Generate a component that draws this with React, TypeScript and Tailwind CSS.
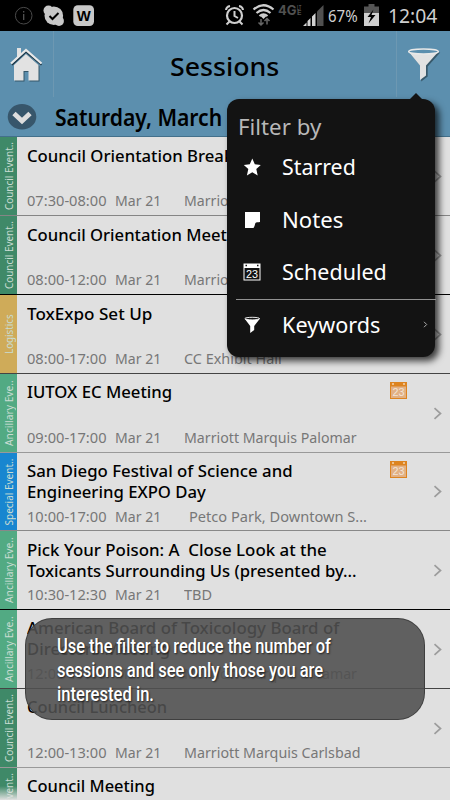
import { useLayoutEffect, useRef, useState } from 'react';
import type { ReactNode } from 'react';

/** Single line of text squeezed or stretched horizontally to a given width. */
function Fit({ w, className = '', children }: { w: number; className?: string; children: ReactNode }) {
  const ref = useRef<HTMLSpanElement>(null);
  const [k, setK] = useState(1);
  useLayoutEffect(() => {
    if (ref.current) setK(w / ref.current.offsetWidth);
  }, [w]);
  return (
    <span className={`block shrink-0 whitespace-pre ${className}`} style={{ width: w }}>
      <span ref={ref} className="inline-block origin-left" style={{ transform: `scaleX(${k})` }}>
        {children}
      </span>
    </span>
  );
}

type Line = [string, number];
interface Session {
  label: Line;
  color: string;
  line: string;
  height: string;
  title: Line[];
  time?: string;
  place?: Line;
  indent?: boolean;
  scheduled?: boolean;
  raised?: boolean;
}

const sessions: Session[] = [
  { label: ['Council Event..', 68], color: 'bg-[#3f8968]', line: 'border-[#858585]', height: 'h-[79px]', title: [['Council Orientation Breakfast', 236]], time: '07:30-08:00', place: ['Marriott Marquis', 113] },
  { label: ['Council Event..', 68], color: 'bg-[#3f8968]', line: 'border-black', height: 'h-[79px]', title: [['Council Orientation Meeting', 225]], time: '08:00-12:00', place: ['Marriott Marquis', 113] },
  { label: ['Logistics', 40], color: 'bg-[#cfab59]', line: 'border-[#444]', height: 'h-[79px]', title: [['ToxExpo Set Up', 125.5]], time: '08:00-17:00', place: ['CC Exhibit Hall', 98] },
  { label: ['Ancillary Eve..', 66], color: 'bg-[#52aa83]', line: 'border-[#999]', height: 'h-[79px]', title: [['IUTOX EC Meeting', 145.5]], time: '09:00-17:00', place: ['Marriott Marquis Palomar', 173], scheduled: true, raised: true },
  { label: ['Special Event..', 67], color: 'bg-[#1886d0]', line: 'border-[#888]', height: 'h-[78px]', title: [['San Diego Festival of Science and', 265.5], ['Engineering EXPO Day', 179]], time: '10:00-17:00', place: ['Petco Park, Downtown S...', 178], indent: true, scheduled: true, raised: true },
  { label: ['Ancillary Eve..', 66], color: 'bg-[#52aa83]', line: 'border-black', height: 'h-[79px]', title: [['Pick Your Poison: A  Close Look at the', 299.5], ['Toxicants Surrounding Us (presented by...', 330]], time: '10:30-12:30', place: ['TBD', 28] },
  { label: ['Ancillary Eve..', 66], color: 'bg-[#52aa83]', line: 'border-[#444]', height: 'h-[79px]', title: [['American Board of Toxicology Board of', 312], ['Directors Meeting', 143]], time: '12:00-17:00', place: ['Marriott Marquis Miramar', 173], raised: true },
  { label: ['Council Event..', 68], color: 'bg-[#3f8968]', line: 'border-[#999]', height: 'h-[79px]', title: [['Council Luncheon', 140.5]], time: '12:00-13:00', place: ['Marriott Marquis Carlsbad', 176], raised: true },
  { label: ['Council Event..', 68], color: 'bg-[#3f8968]', line: 'border-[#999]', height: 'h-[79px]', title: [['Council Meeting', 128]], raised: true },
];

function OrangeCalendar() {
  return (
    <svg width="17" height="17" viewBox="0 0 17 17" className="block">
      <rect width="17" height="17" fill="#dd8420" />
      <rect x="1" y="4.500" width="15" height="11.500" fill="#e2b084" />
      <path d="M2 2h2M13 2h2" stroke="#f3d3b0" strokeWidth="1.500" />
      <text x="8.500" y="14" textAnchor="middle" textLength="12" lengthAdjust="spacingAndGlyphs" fontSize="10" fontFamily="Liberation Sans, sans-serif" fill="#f0e4d8">23</text>
    </svg>
  );
}

function SessionRow({ s }: { s: Session }) {
  return (
    <div className={`flex shrink-0 border-b ${s.line} ${s.height}`}>
      <div className={`flex w-[17px] shrink-0 items-center justify-center ${s.color}`}>
        <div className="shrink-0 -rotate-90">
          <Fit w={s.label[1]} className="text-[11.500px] leading-[16px] text-[#c9dcd2]">{s.label[0]}</Fit>
        </div>
      </div>
      <div className={`flex w-[350px] shrink-0 flex-col pl-[10px] ${s.raised ? 'pt-[7px]' : 'pt-[8px]'}`}>
        <div className={`text-[17px] font-medium leading-[21px] text-black ${s.raised ? 'h-[46px]' : 'h-[45px]'}`}>
          {s.title.map(([t, w]) => <Fit key={t} w={w}>{t}</Fit>)}
        </div>
        {s.time && s.place && (
          <div className="flex text-[15px] leading-[20px] text-[#777]">
            <Fit w={80} className="mr-[8px]">{s.time}</Fit>
            <Fit w={46} className="mr-[23px]">Mar 21</Fit>
            <Fit w={s.place[1]} className={s.indent ? 'ml-[5px]' : ''}>{s.place[0]}</Fit>
          </div>
        )}
      </div>
      <div className="w-[40px] shrink-0 pl-[23px] pt-[8px]">{s.scheduled && <OrangeCalendar />}</div>
      <div className="flex flex-1 items-center justify-end pr-[8px]">
        <svg width="9" height="13" viewBox="0 0 9 13" fill="none" stroke="#9c9c9c" strokeWidth="1.700">
          <path d="M1.500 1.200 7.500 6.500l-6 5.300" />
        </svg>
      </div>
    </div>
  );
}

function StatusBar() {
  return (
    <div className="flex h-[31px] shrink-0 items-start bg-black text-[#cfcfcf]">
      <svg width="100" height="31" viewBox="0 0 100 31">
        <circle cx="23.700" cy="15.700" r="8.300" fill="none" stroke="#4a4a4a" strokeWidth="1" />
        <path d="M23.700 14v6M23.700 11v1.500" stroke="#5a5a5a" strokeWidth="1.200" />
        <circle cx="53.800" cy="15.700" r="9.300" fill="#c8c8c8" />
        <circle cx="48.500" cy="10.500" r="5" fill="#c8c8c8" />
        <circle cx="59" cy="21" r="4.900" fill="#c8c8c8" />
        <path d="m49.500 16 3 3 6-6" fill="none" stroke="#000" strokeWidth="2" />
        <rect x="73.300" y="5.300" width="20.700" height="20.700" rx="4.500" fill="#c8c8c8" />
        <text x="83.700" y="21" textAnchor="middle" textLength="14" lengthAdjust="spacingAndGlyphs" fontSize="14.500" fontWeight="700" fontFamily="Liberation Sans, sans-serif" fill="#000">W</text>
      </svg>
      <svg width="228" height="31" viewBox="100 0 228 31">
        <g fill="none" stroke="#cfcfcf">
          <circle cx="234.500" cy="15.500" r="7.500" strokeWidth="2.200" />
          <path d="M234.500 11v5l3.500 2M229.500 21.500l-3 3M239.500 21.500l3 3M226 10q.3-3.300 4-4M243 10q-.3-3.300-4-4" strokeWidth="2" />
          <path d="M253.500 9.500q10-8.500 20 0M256.500 13q7-6 14 0M259.500 16q4-3.300 8 0" strokeWidth="2.200" />
        </g>
        <path d="m260.500 16 3-1.500 3 1.500-3 3z" fill="#cfcfcf" />
        <path d="M261 25v-6M258.500 22.500l2.500 2.500 2.500-2.500M267 18.500v6M264.500 21l2.500-2.500 2.500 2.500" fill="none" stroke="#666" strokeWidth="1.500" />
        <text x="278" y="15" textLength="18.500" lengthAdjust="spacingAndGlyphs" fontSize="13.500" fontWeight="700" fontFamily="Inter, sans-serif" fill="#505050">4G</text>
        <text x="297" y="9.500" textLength="4.500" lengthAdjust="spacingAndGlyphs" fontSize="6" fontWeight="700" fontFamily="Inter, sans-serif" fill="#505050">LT</text>
        <text x="297" y="15" textLength="4.500" lengthAdjust="spacingAndGlyphs" fontSize="6" fontWeight="700" fontFamily="Inter, sans-serif" fill="#505050">E</text>
        <path d="M317 11.500 323.500 5v21H317z" fill="#505050" />
        <path d="M303 26l3.500-3.500V26zM307.500 26v-5l3-3v8zM312 26v-9.500l3.500-3.500v13z" fill="#d2d2d2" />
      </svg>
      <Fit w={30} className="pt-[6px] text-[15.500px] leading-[20px]">67%</Fit>
      <svg width="30" height="31" viewBox="358 0 30 31">
        <path d="M368.500 4h6v2.500h4.500v7h-15v-7h4.500z" fill="#555" />
        <path d="M364 13h15v13h-15z" fill="#cfcfcf" />
        <path d="m373.500 9.500-6 7.500h3.500l-2.500 6.500 7-8.500h-4z" fill="#000" />
      </svg>
      <Fit w={49} className="pt-[3px] text-[20.500px] leading-[24px]">12:04</Fit>
    </div>
  );
}

function Header() {
  return (
    <div className="flex h-[106px] shrink-0 flex-col border-b border-[#43708b] bg-[#5c8fae]">
      <div className="flex h-[66px] shrink-0">
        <div className="flex w-[54px] border-r border-[#6d98b2] pl-[9px] pt-[15px]">
          <svg width="36" height="37" viewBox="0 0 36 37">
            <path d="M5 20 17.500 8 30.500 20v15.500H20.500V26h-5v9.500H6z" fill="#25404f" opacity=".7" />
            <path d="M5 19 17 8l12.500 11v15.500H19.500V25h-5v9.500H5z" fill="#e2e2e2" />
            <path d="M8 13V2h4v7z" fill="#e2e2e2" />
            <path d="M3 19 17 6l15.500 13" fill="none" stroke="#1f3745" strokeWidth="1.600" />
            <path d="M2 17.500 17 4l15.500 13.500" fill="none" stroke="#e8e8e8" strokeWidth="2.200" />
          </svg>
        </div>
        <div className="flex flex-1 justify-start border-r border-[#6d98b2] pl-[116px] pt-[19px]">
          <Fit w={109} className="text-[25px] font-medium leading-[32px] text-black">Sessions</Fit>
        </div>
        <div className="w-[53px] pl-[10px] pt-[16px]">
          <svg width="34" height="36" viewBox="0 0 34 36">
            <path d="M1.500 5 13.500 19v15l6.500-5V19L32.500 5z" fill="#29414e" opacity=".7" transform="translate(.7 .5)" />
            <path d="M1 4 13 18.500V33l6-4.500v-10L32 4z" fill="#e2e2e2" />
            <ellipse cx="16.500" cy="4.500" rx="14.800" ry="2.600" fill="#5c8fae" stroke="#e8e8e8" strokeWidth="1.500" />
          </svg>
        </div>
      </div>
      <div className="flex flex-1 pl-[7px]">
        <svg width="30" height="30" viewBox="0 0 30 30" className="mt-[5px]">
          <ellipse cx="15" cy="14.800" rx="14.300" ry="12.800" fill="#37566b" />
          <path d="m7 11.500 8 7.500 8-7.500" fill="none" stroke="#dedede" strokeWidth="4.800" />
        </svg>
        <Fit w={167} className="ml-[18px] pt-[5px] text-[23px] font-semibold leading-[30px] text-black">Saturday, March</Fit>
      </div>
    </div>
  );
}

function MenuItem({ icon, text, w, more }: { icon: ReactNode; text: string; w: number; more?: boolean }) {
  return (
    <div className="flex h-[52.500px] items-center text-white">
      <div className="flex w-[55px] shrink-0 pl-[15px]">
        <svg width="20" height="20" viewBox="0 0 20 20">{icon}</svg>
      </div>
      <Fit w={w} className="text-[22.500px] leading-[30px]">{text}</Fit>
      {more && (
        <svg width="5" height="7" viewBox="0 0 5 7" className="ml-auto mr-[7px]" fill="none" stroke="#aaa">
          <path d="m1 .8 2.700 2.700L1 6.200" />
        </svg>
      )}
    </div>
  );
}

function FilterMenu() {
  return (
    <div className="absolute left-[227px] top-[99px] h-[257.500px] w-[208px] rounded-[12px] bg-[#131313] shadow-[4px_4px_7px_rgba(0,0,0,0.75)]">
      <svg width="14" height="7" viewBox="0 0 14 7" className="absolute -top-[6px] left-[182px]">
        <path d="M0 7 7 0l7 7z" fill="#131313" />
      </svg>
      <div className="h-[42px] pl-[11px] pt-[12px]">
        <Fit w={83} className="text-[22px] leading-[30px] text-[#b8b8b8]">Filter by</Fit>
      </div>
      <MenuItem text="Starred" w={74} icon={<path d="m10.300 1.500 2.500 5.800 6 .6-4.500 4.200 1.400 6.400-5.400-3.300-5.400 3.300 1.400-6.400-4.500-4.200 6-.6z" fill="#fff" />} />
      <MenuItem text="Notes" w={61} icon={<path d="M3 2h15v10c-2 .2-4 .3-4.500 1-.7 1-.5 3-2 5H3z" fill="#fff" />} />
      <MenuItem
        text="Scheduled"
        w={105}
        icon={
          <>
            <path d="M1.500 1.500h17v17h-17z" fill="#fff" />
            <path d="M2.500 6h15v11.500h-15zM3.500 2.800H5v1.500H3.500zM15 2.800h1.500v1.500H15z" fill="#131313" />
            <text x="10" y="15.800" textAnchor="middle" textLength="12" lengthAdjust="spacingAndGlyphs" fontSize="10.500" fontFamily="Liberation Sans, sans-serif" fill="#fff">23</text>
          </>
        }
      />
      <div className="-mb-px ml-[9px] h-px w-[200px] bg-[#929292]" />
      <MenuItem
        text="Keywords"
        w={98}
        more
        icon={
          <>
            <path d="M2.500 3.500 8.200 11v7l4-3v-4L18 3.500z" fill="#fff" />
            <ellipse cx="10.200" cy="3.600" rx="7.300" ry="1.300" fill="#131313" stroke="#fff" strokeWidth=".9" />
          </>
        }
      />
    </div>
  );
}

function Toast() {
  return (
    <div className="absolute left-[25px] top-[618px] h-[102px] w-[400px] rounded-[27px] border border-[rgba(62,62,62,0.95)] bg-[rgba(80,80,80,0.89)] pl-[31px] pt-[16px] font-[Roboto,sans-serif] text-[19.500px] font-medium leading-[24px] text-white [text-shadow:1px_1px_2px_rgba(0,0,0,0.7)]">
      <Fit w={274}>Use the filter to reduce the number of</Fit>
      <Fit w={266}>sessions and see only those you are</Fit>
      <Fit w={97}>interested in.</Fit>
    </div>
  );
}

export default function App() {
  return (
    <div className="relative flex h-[800px] w-[450px] flex-col overflow-hidden bg-[#e0e0e0] font-['Noto_Sans',sans-serif]">
      <StatusBar />
      <Header />
      <div className="flex flex-1 flex-col overflow-hidden">
        {sessions.map((s, i) => <SessionRow key={i} s={s} />)}
      </div>
      <div className="absolute bottom-0 left-0 h-[14px] w-[17px] bg-linear-to-b from-transparent to-[#e0e0e0]" />
      <FilterMenu />
      <Toast />
    </div>
  );
}
